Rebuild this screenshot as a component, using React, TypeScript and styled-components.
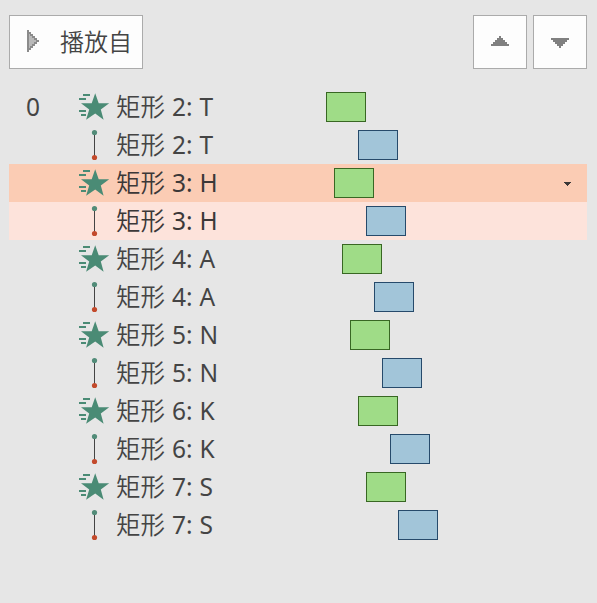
import React from 'react';
import styled, { createGlobalStyle } from 'styled-components';

const GlobalStyle = createGlobalStyle`
  * { box-sizing: border-box; }
  body {
    margin: 0;
    background: #e6e6e6;
    color: #444;
    font-family: "Noto Sans", "Noto Sans CJK SC", sans-serif;
    font-size: 24.5px;
  }
`;

const Pane = styled.main`
  min-height: 603px;
  padding: 15px 10px 0 9px;
  background: #e6e6e6;
`;

const Toolbar = styled.header`
  display: flex;
  gap: 6px;
  height: 54px;
  margin-bottom: 19px;
`;

const Button = styled.button<{ $top?: number; $bottom?: number }>`
  display: flex;
  align-items: center;
  justify-content: center;
  width: 54px;
  height: 54px;
  padding: ${({ $top = 0 }) => $top}px 0 ${({ $bottom = 0 }) => $bottom}px;
  border: 1px solid #ababab;
  background: #fdfdfd;
  color: inherit;
  font: inherit;
`;

const PlayButton = styled(Button)`
  justify-content: flex-start;
  gap: 20px;
  width: 134px;
  margin-right: auto;
  padding-left: 17px;
`;

const ButtonText = styled.span`
  font-family: "Noto Sans CJK SC", sans-serif;
  font-size: 24px;
  font-weight: 350;
  line-height: 34px;
  white-space: nowrap;
`;

const Row = styled.div<{ $tone?: string }>`
  display: grid;
  grid-template-columns: 70px 37px 210px 1fr 23px;
  height: 38px;
  background: ${({ $tone }) => $tone ?? 'transparent'};
  color: ${({ $tone }) => ($tone ? '#3b3838' : '#444')};
`;

const Order = styled.span`
  padding-left: 17px;
  line-height: 38px;
`;

const Label = styled.span`
  display: flex;
  line-height: 38px;
  white-space: nowrap;
`;

const ShapeName = styled.span`
  width: 56px;
  font-family: "Noto Sans CJK SC", sans-serif;
  font-size: 24.5px;
  font-weight: 350;
  line-height: 36px;
`;

const ShapeNumber = styled.span`
  width: 27px;
`;

const ShapeLetter = styled.span`
  padding-left: 0.5px;
`;

const Track = styled.div`
  display: flex;
  align-items: flex-start;
  padding-top: 4px;
`;

const Bar = styled.div<{ $kind: Kind; $offset: number }>`
  width: 40px;
  height: 30px;
  margin-left: ${({ $offset }) => $offset}px;
  border: 1px solid ${({ $kind }) => ($kind === 'star' ? '#386723' : '#264a6b')};
  background: ${({ $kind }) => ($kind === 'star' ? '#9fdc87' : '#a2c5d9')};
`;

const Glyph = styled.svg`
  display: block;
`;

const MenuArrow = styled(Glyph)`
  margin-top: 18px;
`;

type Kind = 'star' | 'path';

const StarIcon = () => (
  <Glyph width="32" height="38" viewBox="0 0 32 38">
    <g fill="#4a8b75">
      <path d="M16.2 5.3 19.7 15.2H30.2L21.8 21.5 24.6 31.7 16.2 25.6 7.1 31.7 10.2 21.5 2 15.2H12.7Z" />
      <path d="M4 6h7v2H4zM0 10h7v2H0zM0 22h7v2H0zM2 26h5v2H2z" />
    </g>
  </Glyph>
);

const PathIcon = () => (
  <Glyph width="32" height="38" viewBox="0 0 32 38">
    <path d="M15 7h1v24h-1z" fill="#444" />
    <circle cx="15.5" cy="6.5" r="2.6" fill="#528c79" />
    <circle cx="15.5" cy="31.5" r="2.6" fill="#c34a2c" />
  </Glyph>
);

const shapes = ['T', 'H', 'A', 'N', 'K', 'S'];
const kinds: Kind[] = ['star', 'path'];
const tones: Record<Kind, string> = { star: '#fbccb4', path: '#fde3db' };

export default function App() {
  return (
    <>
      <GlobalStyle />
      <Pane>
        <Toolbar>
          <PlayButton $bottom={2}>
            <Glyph width="13" height="22" viewBox="0 0 13 22" shapeRendering="crispEdges">
              <path d="M0 0h2v2h2v2h2v2h2v2h2v2h2v2h-2v2H8v2H6v2H4v2H2v2H0z" fill="#8b8b8b" />
              <path d="M2 4h1v2h2v2h2v2h2v2H7v2H5v2H3v2H2z" fill="#b9b9b9" />
            </Glyph>
            <ButtonText>播放自</ButtonText>
          </PlayButton>
          <Button aria-label="上移" $bottom={2}>
            <Glyph width="18" height="10" viewBox="0 0 18 10" shapeRendering="crispEdges">
              <path d="M8 0h2v2h2v2h2v2h2v2h2v2H0V8h2V6h2V4h2V2h2z" fill="#808080" />
            </Glyph>
          </Button>
          <Button aria-label="下移" $top={2}>
            <Glyph width="18" height="10" viewBox="0 0 18 10" shapeRendering="crispEdges">
              <path d="M0 0h18v2h-2v2h-2v2h-2v2h-2v2H8V8H6V6H4V4H2V2H0z" fill="#808080" />
            </Glyph>
          </Button>
        </Toolbar>
        {shapes.map((letter, i) =>
          kinds.map((kind) => (
            <Row key={letter + kind} $tone={i === 1 ? tones[kind] : undefined}>
              <Order>{i === 0 && kind === 'star' ? '0' : ''}</Order>
              {kind === 'star' ? <StarIcon /> : <PathIcon />}
              <Label>
                <ShapeName>矩形</ShapeName>
                <ShapeNumber>{i + 2}:</ShapeNumber>
                <ShapeLetter>{letter}</ShapeLetter>
              </Label>
              <Track>
                <Bar $kind={kind} $offset={i * 8 + (kind === 'path' ? 32 : 0)} />
              </Track>
              {i === 1 && kind === 'star' && (
                <MenuArrow width="7" height="4" viewBox="0 0 7 4" shapeRendering="crispEdges">
                  <path d="M0 0h7v1H6v1H5v1H4v1H3V3H2V2H1V1H0z" fill="#3b3838" />
                </MenuArrow>
              )}
            </Row>
          )),
        )}
      </Pane>
    </>
  );
}
